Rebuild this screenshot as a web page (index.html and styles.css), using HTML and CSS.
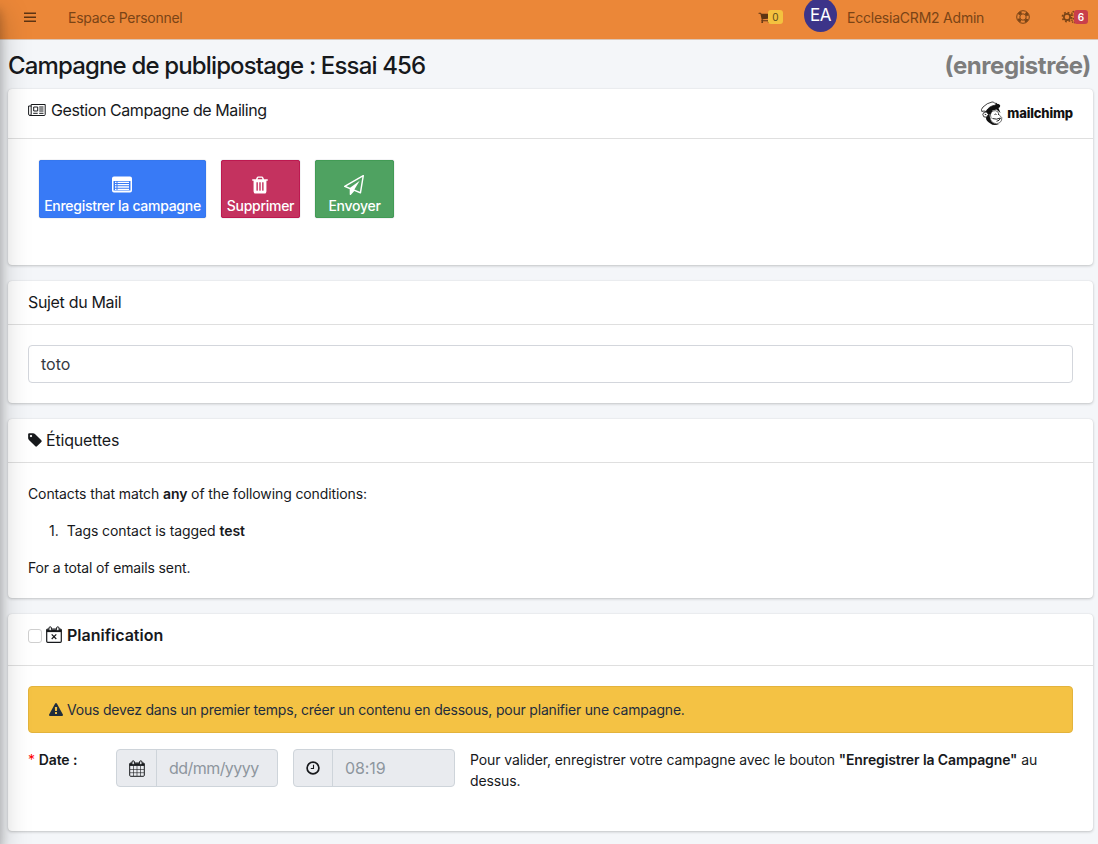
FILE: index.html
```html
<!DOCTYPE html>
<html lang="fr">
<head>
<meta charset="utf-8">
<title>Campagne de publipostage</title>
<link rel="stylesheet" href="styles.css">
</head>
<body>
<nav class="navbar">
  <svg class="menu" viewBox="0 0 14 14"><path d="M1 3.300h12M1 7.300h12M1 11.300h12" stroke="currentColor" stroke-width="1.500"/></svg>
  <a class="nav-title"><span class="t-space">Espace Personnel</span></a>
  <span class="cart"><svg viewBox="0 0 1792 1792"><path fill="currentColor" d="M704 1536q0 52-38 90t-90 38-90-38-38-90 38-90 90-38 90 38 38 90zm896 0q0 52-38 90t-90 38-90-38-38-90 38-90 90-38 90 38 38 90zm128-1088v512q0 24-16.5 42.5t-40.5 21.5l-1044 122q13 60 13 70 0 16-24 64h920q26 0 45 19t19 45-19 45-45 19h-1024q-26 0-45-19t-19-45q0-11 8-31.5t16-36 21.5-40 15.5-29.5l-177-823h-204q-26 0-45-19t-19-45 19-45 45-19h256q16 0 28.5 6.5t19.5 15.5 13 24.5 8 26 5.5 29.5 4.5 26h1201q26 0 45 19t19 45z"/></svg><b class="badge yellow">0</b></span>
  <span class="avatar">EA</span>
  <span class="user">EcclesiaCRM2 Admin</span>
  <svg class="ring" viewBox="0 0 14 14" fill="none" stroke="currentColor"><circle cx="7" cy="7" r="6.3" stroke-width="1"/><circle cx="7" cy="7" r="3.2" stroke-width="1"/><circle cx="7" cy="7" r="4.8" stroke-width="2.6" stroke-dasharray="3.4 4.14" stroke-dashoffset="-2.07"/></svg>
  <span class="cogs"><svg viewBox="0 0 16 14" fill="none" stroke="currentColor"><circle cx="5.5" cy="7" r="3.1" stroke-width="1.7"/><circle cx="5.5" cy="7" r="4.6" stroke-width="1.6" stroke-dasharray="1.8 1.81"/><circle cx="12.5" cy="3.6" r="2" stroke-width="1.5" stroke-dasharray="1.2 .6"/><circle cx="12.5" cy="10.6" r="2" stroke-width="1.5" stroke-dasharray="1.2 .6"/></svg><b class="badge red">6</b></span>
</nav>
<header class="heading"><h1>Campagne de publipostage : Essai 456</h1><h2>(enregistrée)</h2></header>
<main>
  <section class="card manage">
    <div class="card-head">
      <svg class="news" viewBox="0 0 18 14" fill="none" stroke="currentColor"><path d="M3.2 1.5h14v10q0 1-1 1H2Q.6 12.500.6 11V3h2.600M3.200 1.500V11q0 1.500-1.200 1.500" /><path d="M5.700 4h4v4h-4zM11.200 4h4.300M11.200 6h4.300M11.200 8h4.300M5.200 10.300h4.500M11.200 10.300h4.300"/></svg>
      <h3 class="t-manage">Gestion Campagne de Mailing</h3>
      <span class="brand"><svg viewBox="0 0 24 25"><path d="M12.500 3.500Q18 2 20 4q.7 2-1.500 3l2 5-4-3.500-4 1-2 4.500-1-1 .5 4q1 4 5 5.500 2 .8 4 .5-5 2.500-9-.8Q6 20 6 17l0-7Q8 5.500 12.500 3.500z" fill="#111"/><path d="M1.800 10.500Q.6 8.500 3 6 7 2 12 1q2-.3 2.600 1.200L17 2.500 15 4.200Q9 5 6 10.500 4 9.500 1.800 10.500z" fill="#fff" stroke="#111" stroke-width=".8"/><path d="M6.500 11Q3 10.500 2.800 13.500q.2 3.300 3.700 2.700l2-2.800z" fill="#fff" stroke="#111" stroke-width=".8"/><path d="M10.500 13.500q1-4 5-3.800 3 .3 3.500 4l2.800 3q.3 5.300-5.300 6-4 .3-6-4 1-2 .2-3.500z" fill="#fff" stroke="#111" stroke-width=".6"/><path d="M14.500 13.500q1-.8 2 0M18 13.300l1 .2M12.500 17.500q4 1.500 8-.5-1 3-4 3.300M4.700 13.200l1.600.5" fill="none" stroke="#111" stroke-width=".9"/></svg><b>mailchimp</b></span>
    </div>
    <div class="actions">
      <button class="btn save"><svg viewBox="0 0 20 17"><path fill="currentColor" fill-rule="evenodd" d="M2 .5h16q2 0 2 2V14.500q0 2-2 2H2q-2 0-2-2V2.500q0-2 2-2zM1.500 5v9.500h17V5z"/><path d="M3 6.400h1.500M5.500 6.400H17M3 8.700h1.500M5.500 8.700H17M3 11h1.500M5.500 11H17M3 13.300h1.500M5.500 13.300H17" stroke="currentColor" stroke-width="1.300"/></svg><span>Enregistrer la campagne</span></button>
      <button class="btn del"><svg viewBox="0 0 1792 1792"><path fill="currentColor" d="M704 1376v-704q0-14-9-23t-23-9h-64q-14 0-23 9t-9 23v704q0 14 9 23t23 9h64q14 0 23-9t9-23zm256 0v-704q0-14-9-23t-23-9h-64q-14 0-23 9t-9 23v704q0 14 9 23t23 9h64q14 0 23-9t9-23zm256 0v-704q0-14-9-23t-23-9h-64q-14 0-23 9t-9 23v704q0 14 9 23t23 9h64q14 0 23-9t9-23zm-544-992h448l-48-117q-7-9-17-11h-317q-10 2-17 11zm928 32v64q0 14-9 23t-23 9h-96v948q0 83-47 143.500t-113 60.500h-832q-66 0-113-58.500t-47-141.500v-952h-96q-14 0-23-9t-9-23v-64q0-14 9-23t23-9h309l70-167q15-37 54-63t79-26h320q40 0 79 26t54 63l70 167h309q14 0 23 9t9 23z"/></svg><span>Supprimer</span></button>
      <button class="btn send"><svg viewBox="0 0 1792 1792"><path fill="currentColor" d="M1764 11q33 24 27 64l-256 1536q-5 29-32 45-14 8-31 8-11 0-24-5l-527-215-298 327q-18 21-47 21-14 0-23-4-19-7-30-23.500t-11-36.500v-452l-472-193q-37-14-40-55-3-39 32-59l1664-960q35-21 68 2zm-342 1499l221-1323-1434 827 336 137 863-639-478 797z"/></svg><span>Envoyer</span></button>
    </div>
  </section>
  <section class="card subject">
    <div class="card-head"><h3 class="t-subject">Sujet du Mail</h3></div>
    <div class="card-body"><div class="input"><span>toto</span></div></div>
  </section>
  <section class="card tags">
    <div class="card-head"><svg class="tag" viewBox="0 0 1792 1792"><path fill="currentColor" d="M576 448q0-53-37.500-90.500t-90.500-37.500-90.500 37.500-37.500 90.500 37.500 90.500 90.500 37.500 90.500-37.500 37.500-90.500zm1067 576q0 53-37 90l-491 492q-39 37-91 37-53 0-90-37l-715-716q-38-37-64.500-101t-26.500-117v-416q0-52 38-90t90-38h416q53 0 117 26.500t102 64.500l715 714q37 39 37 91z"/></svg><h3 class="t-tags">Étiquettes</h3></div>
    <div class="card-body">
      <p class="t-match">Contacts that match <b>any</b> of the following conditions:</p>
      <ol><li><span>1.</span><span class="t-li">Tags contact is tagged <b>test</b></span></li></ol>
      <p class="t-total">For a total of emails sent.</p>
    </div>
  </section>
  <section class="card plan">
    <div class="card-head"><i class="check"></i><svg class="calx" viewBox="0 0 16 17" fill="none" stroke="currentColor"><rect x=".7" y="3" width="14.600" height="13.300" rx="1" stroke-width="1.200"/><path d="M.7 4.800h14.600" stroke-width="2.600"/><rect x="3" y=".8" width="2.400" height="4" rx="1.200" fill="#fff"/><rect x="10.600" y=".8" width="2.400" height="4" rx="1.200" fill="#fff"/><path d="M5.700 8.400l4.600 4.600M10.300 8.400L5.700 13" stroke-width="1.200"/></svg><h3 class="t-plan"><b>Planification</b></h3></div>
    <div class="card-body">
      <div class="alert"><svg viewBox="0 0 1792 1792"><path fill="currentColor" d="M1024 1375v-190q0-14-9.500-23.500t-22.500-9.500h-192q-13 0-22.500 9.500t-9.500 23.500v190q0 14 9.500 23.500t22.500 9.500h192q13 0 22.500-9.500t9.500-23.500zm-2-374l18-459q0-12-10-19-13-11-24-11h-220q-11 0-24 11-10 7-10 21l17 457q0 10 10 16.500t24 6.500h185q14 0 23.500-6.500t10.500-16.500zm-14-934l768 1408q35 63-2 126-17 29-46.500 46t-63.500 17h-1536q-34 0-63.500-17t-46.500-46q-37-63-2-126l768-1408q17-31 47-49t65-18 65 18 47 49z"/></svg><span>Vous devez dans un premier temps, créer un contenu en dessous, pour planifier une campagne.</span></div>
      <div class="schedule">
        <label><em>*</em> <b>Date :</b></label>
        <div class="group date"><span class="addon"><svg viewBox="0 0 16 17" fill="none" stroke="currentColor"><rect x=".7" y="3" width="14.600" height="13.300" rx="1"/><path d="M.7 4.600h14.600" stroke-width="2.600"/><rect x="3" y=".8" width="2.400" height="4" rx="1.200" fill="#e9ebef"/><rect x="10.600" y=".8" width="2.400" height="4" rx="1.200" fill="#e9ebef"/><path d="M4.500 6v10M8 6v10M11.500 6v10M1 9.500h14M1 12.700h14" stroke-width=".6"/></svg></span><span class="field"><span>dd/mm/yyyy</span></span></div>
        <div class="group time"><span class="addon"><svg class="clock" viewBox="0 0 14 14" fill="none" stroke="currentColor"><circle cx="7" cy="7" r="5.900" stroke-width="1.700"/><path d="M7.500 3.700v3.800H4.800" stroke-width="1.100"/></svg></span><span class="field"><span>08:19</span></span></div>
        <p>Pour valider, enregistrer votre campagne avec le bouton <b>"Enregistrer la Campagne"</b> au<br>dessus.</p>
      </div>
    </div>
  </section>
</main>
<aside class="drawer"></aside>
</body>
</html>
```
FILE: styles.css
```css
* { box-sizing: border-box; }
body { margin: 0; height: 844px; overflow: hidden; background: #f4f6f9; color: #17191c; font: 14px/21px Inter, "Liberation Sans", sans-serif; }
svg { display: block; flex: none; }
h1, h2, h3, p, ol { margin: 0; font-weight: 400; }
b { font-weight: 600; }
span, h1, h2, h3, b { white-space: nowrap; }

.navbar { height: 40px; padding: 0 10px 5px 23px; display: flex; align-items: center; background: #eb8738; border-bottom: 1px solid #dcc5b4; color: #7a4416; }
.menu { width: 14px; height: 14px; color: #5d3413; }
.nav-title { margin-left: 31px; letter-spacing: -.26px; }
.cart { display: flex; align-items: center; margin-left: auto; width: 25px; color: #5d3413; }
.cart svg { width: 13px; height: 13px; }
.badge { height: 14px; border-radius: 3px; font-size: 10px; line-height: 14px; text-align: center; }
.yellow { width: 15px; margin-left: -3px; background: #f4c23f; color: #5a4a1c; font-weight: 400; }
.red { width: 14px; margin-left: -4px; background: #c93f4b; color: #fff; }
.avatar { width: 33px; height: 34px; margin: -5px 10px 0 21px; border-radius: 50%; background: #3c3489; color: #fff; font-size: 17px; line-height: 34px; text-align: center; letter-spacing: -.4px; }
.user { width: 138px; letter-spacing: -.22px; }
.ring { width: 14px; height: 14px; margin: 0 31px 0 31px; }
.cogs { display: flex; align-items: center; width: 27px; }
.cogs svg { width: 17px; height: 14px; }

.heading { height: 49px; padding: 2px 7px 0 8px; display: flex; justify-content: space-between; align-items: center; }
.heading h1 { font-size: 24px; font-weight: 500; line-height: 30px; letter-spacing: -.85px; }
.heading h2 { font-size: 24px; font-weight: 700; line-height: 30px; color: #7d7d7d; letter-spacing: -.42px; }

main { padding: 0 5px 0 8px; display: flex; flex-direction: column; gap: 16px; }
.card { background: #fff; border-radius: 4px; box-shadow: 0 0 1px rgba(0,0,0,.13), 0 1px 3px rgba(0,0,0,.2); }
.card-head { display: flex; align-items: center; height: 44px; padding: 0 20px; border-bottom: 1px solid #dfdfdf; color: #17191c; }
.card-head h3 { font-size: 16px; line-height: 22px; padding-bottom: 2px; }
.t-manage { letter-spacing: -.42px; }
.t-subject { letter-spacing: -.33px; }
.t-tags { letter-spacing: -.18px; }
.card-body { padding: 20px; }
.manage { height: 176px; }
.manage .card-head { height: 50px; padding-bottom: 6px; }
.news { width: 18px; height: 14px; margin: 0 5px 2px 0; }
.brand { display: flex; align-items: center; margin: 6px 0 0 auto; color: #111; }
.brand svg { width: 24px; height: 25px; margin-right: 3px; }
.brand b { font-size: 13px; font-weight: 800; letter-spacing: -.15px; }
.actions { display: flex; gap: 15px; padding: 21px 31px; }
.btn { display: flex; flex-direction: column; align-items: center; justify-content: flex-end; height: 58px; padding: 0 0 1px; border: 1px solid; border-radius: 2px; color: #fff; font: 500 14px/20px Inter, sans-serif; letter-spacing: -.28px; box-shadow: 0 0 1px #889; }
.btn svg { width: 20px; height: 20px; margin: 0 1px 1px 0; }
.save { width: 167px; background: #387af6; border-color: #3577ef; }
.save svg { height: 17px; margin-bottom: 3px; }
.del { width: 79px; background: #c4325f; border-color: #bd1950; }
.send { width: 79px; background: #4fa261; border-color: #429b55; }
.subject { height: 122px; }
.input { height: 38px; display: flex; align-items: center; padding: 0 12px; border: 1px solid #d3d6dc; border-radius: 4px; font-size: 16px; color: #343a43; }
.tags { height: 179px; }
.tag { width: 16px; height: 16px; margin: 0 3px 2px -1px; }
.t-match { letter-spacing: -.11px; }
.t-total { letter-spacing: -.14px; }
.t-li { letter-spacing: -.08px; }
ol { margin: 16px 0; padding-left: 21px; list-style: none; }
li { display: flex; gap: 8px; }
.plan { height: 217px; }
.plan .card-head { height: 52px; padding-bottom: 8px; }
.check { width: 14px; height: 14px; border: 1px solid #cfcfcf; border-radius: 3px; margin-right: 4px; }
.calx { width: 16px; height: 17px; margin: 0 5px 2px 0; }
.alert { height: 47px; padding: 0 20px; display: flex; align-items: center; border: 1px solid #e3b33c; border-radius: 4px; background: #f4c244; color: #1f2d3d; letter-spacing: -.2px; }
.alert svg { width: 14px; height: 14px; margin-right: 4px; }
.schedule { display: flex; align-items: flex-start; padding-top: 16px; letter-spacing: -.11px; }
.schedule label { width: 88px; height: 21px; }
.schedule em { color: #f00; font-style: normal; }
.group { display: flex; height: 38px; border: 1px solid #ced4da; border-radius: 4px; background: #e9ebef; margin-right: 15px; }
.date, .time { width: 162px; }
.addon { display: flex; align-items: center; justify-content: center; width: 40px; border-right: 1px solid #ced4da; }
.time .addon { width: 39px; }
.addon svg { width: 16px; height: 17px; }
.addon .clock { width: 14px; height: 14px; }
.field { padding-left: 12px; font-size: 16px; line-height: 37px; color: #8e969e; }
.date .field { letter-spacing: -.55px; }

.drawer { position: fixed; left: -250px; top: 0; width: 250px; height: 844px; box-shadow: 0 14px 28px rgba(0,0,0,.25), 0 10px 10px rgba(0,0,0,.22); }
```
